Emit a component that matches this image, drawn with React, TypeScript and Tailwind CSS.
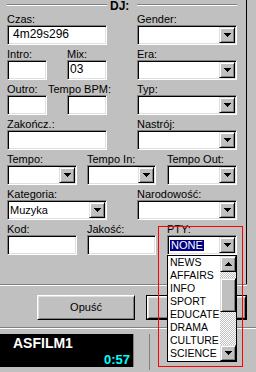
import React from 'react';

const sunken =
  'border border-t-[#808080] border-l-[#808080] border-b-white border-r-white shadow-[inset_1px_1px_0_#000,inset_-1px_-1px_0_#dfdfdf] bg-white';
const raised =
  'bg-[#c0c0c0] border border-t-[#dfdfdf] border-l-[#dfdfdf] border-b-black border-r-black shadow-[inset_1px_1px_0_#fff,inset_-1px_-1px_0_#808080]';
const etched = 'h-[2px] border-t border-t-[#808080] border-b border-b-white';

function Tri({ up = false }: { up?: boolean }) {
  const d = up
    ? 'M3 0h1v1H3zM2 1h3v1H2zM1 2h5v1H1zM0 3h7v1H0z'
    : 'M0 0h7v1H0zM1 1h5v1H1zM2 2h3v1H2zM3 3h1v1H3z';
  return (
    <svg width="7" height="4" viewBox="0 0 7 4" className="block" shapeRendering="crispEdges">
      <path d={d} fill="#000" />
    </svg>
  );
}

function ArrowBtn({ up = false }: { up?: boolean }) {
  return (
    <div className={`${raised} w-[16px] h-[16px] shrink-0 flex items-center justify-center`}>
      <Tri up={up} />
    </div>
  );
}

function Label({ text, shift = 0 }: { text: string; shift?: number }) {
  return (
    <div
      className={`h-[11px] text-[11px] leading-[11px] whitespace-nowrap text-black ${shift ? 'ml-[-19px]' : ''}`}
    >
      {text}
    </div>
  );
}

function Edit({ label, w, value = '', pad = 'pl-[1px]', shift = 0 }: { label: string; w: string; value?: string; pad?: string; shift?: number }) {
  return (
    <div className={`${w} shrink-0`}>
      <Label text={label} shift={shift} />
      <div className={`${sunken} h-[20px] p-[1px]`}>
        <div className={`h-[16px] text-[12px] leading-[15px] text-black ${pad}`}>{value}</div>
      </div>
    </div>
  );
}

function Combo({ label, w, value = '', selected = false }: { label: string; w: string; value?: string; selected?: boolean }) {
  return (
    <div className={`${w} shrink-0`}>
      <Label text={label} />
      <div className={`${sunken} h-[20px] p-[1px] flex`}>
        <div className="flex-1 h-[16px] text-[11px] text-black overflow-hidden">
          {selected ? (
            <span className="inline-block mt-[2px] ml-[1px] h-[11px] leading-[11px] px-[1px] bg-[#000080] text-white">
              {value}
            </span>
          ) : (
            <span className="block pl-[1px] leading-[16px]">{value}</span>
          )}
        </div>
        <ArrowBtn />
      </div>
    </div>
  );
}

const ptyItems = ['NEWS', 'AFFAIRS', 'INFO', 'SPORT', 'EDUCATE', 'DRAMA', 'CULTURE', 'SCIENCE'];

export default function App() {
  return (
    <div className="relative w-[256px] h-[372px] overflow-hidden bg-[#c0c0c0] font-['Liberation_Sans',Arial,sans-serif] text-black">
      {/* formularz DJ */}
      <div className="w-[247px] h-[284px] border-r border-r-black">
        <div className="h-[14px] flex items-start pl-[7px]">
          <div className={`${etched} w-[100px] mt-[4px]`} />
          <div className="w-[30px] pl-[3px] text-[12px] leading-[12px] font-bold">DJ:</div>
          <div className={`${etched} w-[100px] mt-[4px]`} />
        </div>

        <div className="flex pl-[7px] mb-[4px]">
          <Edit label="Czas:" w="w-[100px]" value="4m29s296" pad="pl-[4px]" />
          <div className="ml-[30px]">
            <Combo label="Gender:" w="w-[100px]" />
          </div>
        </div>

        <div className="flex pl-[7px] mb-[4px]">
          <Edit label="Intro:" w="w-[40px]" />
          <div className="ml-[20px]">
            <Edit label="Mix:" w="w-[40px]" value="03" />
          </div>
          <div className="ml-[30px]">
            <Combo label="Era:" w="w-[100px]" />
          </div>
        </div>

        <div className="flex pl-[7px] mb-[4px]">
          <Edit label="Outro:" w="w-[40px]" />
          <div className="ml-[20px]">
            <Edit label="Tempo BPM:" w="w-[40px]" shift={1} />
          </div>
          <div className="ml-[30px]">
            <Combo label="Typ:" w="w-[100px]" />
          </div>
        </div>

        <div className="flex pl-[7px] mb-[4px]">
          <Edit label="Zakończ.:" w="w-[100px]" />
          <div className="ml-[30px]">
            <Combo label="Nastrój:" w="w-[100px]" />
          </div>
        </div>

        <div className="flex pl-[7px] mb-[4px]">
          <Combo label="Tempo:" w="w-[70px]" />
          <div className="ml-[10px]">
            <Combo label="Tempo In:" w="w-[69px]" />
          </div>
          <div className="ml-[11px]">
            <Combo label="Tempo Out:" w="w-[70px]" />
          </div>
        </div>

        <div className="flex pl-[7px] mb-[4px]">
          <Combo label="Kategoria:" w="w-[100px]" value="Muzyka" />
          <div className="ml-[30px]">
            <Combo label="Narodowość:" w="w-[100px]" />
          </div>
        </div>

        <div className="flex pl-[7px]">
          <Edit label="Kod:" w="w-[70px]" />
          <div className="ml-[10px]">
            <Edit label="Jakość:" w="w-[69px]" />
          </div>
          <div className="ml-[11px]">
            <Combo label="PTY:" w="w-[70px]" value="NONE" selected />
          </div>
        </div>
      </div>

      <div className={`${etched} w-[247px]`} />

      {/* przyciski */}
      <div className="flex pl-[37px] mt-[9px]">
        <div className="w-[98px] h-[25px] border border-t-white border-l-white border-b-black border-r-black shadow-[inset_1px_1px_0_#dfdfdf,inset_-1px_-1px_0_#808080] flex items-center justify-center text-[11px] leading-[11px]">
          Opuść
        </div>
        <div className="ml-[11px] w-[101px] h-[25px] border border-black">
          <div className="h-full border border-t-white border-l-white border-b-black border-r-black shadow-[inset_1px_1px_0_#dfdfdf,inset_-1px_-1px_0_#808080]" />
        </div>
      </div>

      <div className={`${etched} w-[256px] mt-[7px]`} />

      {/* pasek odtwarzacza */}
      <div className="flex mt-[5px]">
        <div className="w-[134px] h-[33px] bg-black pl-[13px] pr-[3px] pt-[2px] border-r border-r-[#808080]">
          <div className="text-white font-bold text-[14px] leading-[14px]">ASFILM1</div>
          <div className="text-[#00ffff] font-bold text-[13px] leading-[13px] text-right mt-[3px]">0:57</div>
        </div>
        <div className="w-[16px] h-[36px] border-r border-r-[#808080]" />
      </div>

      {/* rozwinięta lista PTY */}
      <div className="absolute left-[167px] top-[255px] w-[70px] h-[107px] border border-black bg-white flex">
        <div className="flex-1 overflow-hidden pl-[2px]">
          {ptyItems.map((item) => (
            <div key={item} className="h-[13px] text-[10.5px] leading-[13px] whitespace-nowrap">
              {item}
            </div>
          ))}
        </div>
        <div className="w-[16px] flex flex-col">
          <ArrowBtn up />
          <div className="h-[6px] bg-[repeating-conic-gradient(#c0c0c0_0%_25%,#ffffff_0%_50%)] bg-[length:2px_2px]" />
          <div className={`${raised} h-[34px]`} />
          <div className="flex-1 bg-[repeating-conic-gradient(#c0c0c0_0%_25%,#ffffff_0%_50%)] bg-[length:2px_2px]" />
          <ArrowBtn />
        </div>
      </div>

      {/* czerwona ramka */}
      <div className="absolute left-[158px] top-[226px] w-[85px] h-[141px] border border-[#ff0000] pointer-events-none" />
    </div>
  );
}
